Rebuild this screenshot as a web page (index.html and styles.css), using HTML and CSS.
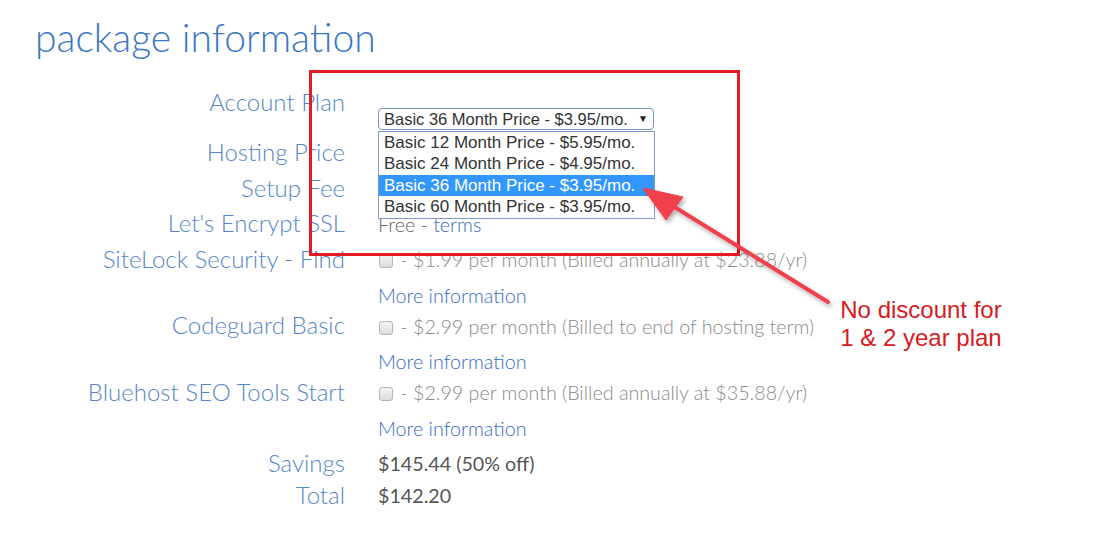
FILE: index.html
```html
<!DOCTYPE html>
<html lang="en">

<head>
    <meta charset="UTF-8">
    <meta name="viewport" content="width=device-width, initial-scale=1.0">
    <title>Package Information</title>
    <link rel="stylesheet" href="styles.css">
</head>

<body>

    <h1 class="title">package information</h1>

    <div class="form">
        <div class="row row-plan">
            <div class="label">Account Plan</div>
            <div class="value">
                <div class="select-wrap">
                    <div class="select">
                        <span>Basic 36 Month Price - $3.95/mo.</span>
                        <span class="caret">&#9660;</span>
                    </div>
                    <ul class="options">
                        <li>Basic 12 Month Price - $5.95/mo.</li>
                        <li>Basic 24 Month Price - $4.95/mo.</li>
                        <li class="selected">Basic 36 Month Price - $3.95/mo.</li>
                        <li>Basic 60 Month Price - $3.95/mo.</li>
                    </ul>
                </div>
            </div>
        </div>

        <!-- values of these two rows sit under the open list -->
        <div class="row">
            <div class="label">Hosting Price</div>
            <div class="value"></div>
        </div>
        <div class="row">
            <div class="label">Setup Fee</div>
            <div class="value"></div>
        </div>
        <div class="row">
            <div class="label">Let's Encrypt SSL</div>
            <div class="value dark">Free - <a href="#">terms</a></div>
        </div>

        <div class="row addon first-addon">
            <div class="label">SiteLock Security - Find</div>
            <div class="value">
                <div class="check-line"><span class="box"></span> - $1.99 per month (Billed annually at $23.88/yr)</div>
                <div class="more"><a href="#">More information</a></div>
            </div>
        </div>
        <div class="row addon">
            <div class="label">Codeguard Basic</div>
            <div class="value">
                <div class="check-line"><span class="box"></span> - $2.99 per month (Billed to end of hosting term)</div>
                <div class="more"><a href="#">More information</a></div>
            </div>
        </div>
        <div class="row addon">
            <div class="label">Bluehost SEO Tools Start</div>
            <div class="value">
                <div class="check-line"><span class="box"></span> - $2.99 per month (Billed annually at $35.88/yr)</div>
                <div class="more"><a href="#">More information</a></div>
            </div>
        </div>

        <div class="row total-row savings">
            <div class="label">Savings</div>
            <div class="value strong">$145.44 (50% off)</div>
        </div>
        <div class="row total-row">
            <div class="label">Total</div>
            <div class="value strong">$142.20</div>
        </div>
    </div>

    <!-- annotation drawn over the screenshot -->
    <div class="note-box"></div>
    <svg class="note-arrow" width="1103" height="534" viewBox="0 0 1103 534">
        <defs>
            <filter id="shadow" x="-20%" y="-20%" width="140%" height="140%">
                <feDropShadow dx="2" dy="3" stdDeviation="2" flood-color="#000" flood-opacity="0.3" />
            </filter>
        </defs>
        <g filter="url(#shadow)" fill="#f0404c" stroke="#f0404c">
            <line x1="828" y1="302" x2="668" y2="203" stroke-width="4" stroke-linecap="round" />
            <polygon points="643,188 683,197 666,220" stroke-width="1" stroke-linejoin="round" />
        </g>
    </svg>
    <div class="note-text">No discount for<br>1 &amp; 2 year plan</div>

</body>

</html>
```

FILE: styles.css
```css
body {
    font-family: Lato, "Open Sans", sans-serif;
    font-weight: 300;
    margin: 0;
    background-color: white;
    position: relative;
    height: 534px;
    overflow: hidden;
}

.title {
    font-size: 39px;
    font-weight: 300;
    line-height: 48px;
    color: #3b76c6;
    margin: 13px 0 0 35px;
}

.form {
    margin-top: 23px;
}

.row {
    display: grid;
    grid-template-columns: 345px 1fr;
    column-gap: 33px;
    align-items: start;
    line-height: 35.5px;
}

.label {
    text-align: right;
    font-size: 24px;
    color: #5686c6;
    white-space: nowrap;
}

.value {
    font-size: 19.7px;
    color: #8a8a8a;
    white-space: nowrap;
    /* line the smaller text up with the label baseline */
    margin-top: 1.6px;
    margin-bottom: -1.6px;
}

.value a {
    color: #3a6bbf;
    text-decoration: none;
}

.dark {
    color: #666;
}

.strong {
    color: #555;
    font-weight: 400;
}

/* account plan row with the open drop-down */
.row-plan {
    height: 50px;
}

.row-plan .value {
    margin: 0;
    padding-top: 24px;
}

.select-wrap {
    position: relative;
    width: 276px;
    font-family: "Liberation Sans", Arial, sans-serif;
    font-weight: 400;
    font-size: 16.5px;
    line-height: 20px;
    color: #333;
}

.select {
    display: flex;
    justify-content: space-between;
    align-items: center;
    height: 20px;
    padding: 0 5px 0 5px;
    border: 1px solid #7895bd;
    border-radius: 4px;
}

.caret {
    font-size: 10px;
    color: #222;
}

.options {
    position: absolute;
    top: 23px;
    left: 0;
    width: 275px;
    margin: 0;
    padding: 0 0 1px 0;
    list-style: none;
    background-color: white;
    border: 1px solid #7f9ccc;
    font-size: 17px;
    z-index: 2;
}

.options li {
    height: 21.3px;
    line-height: 21px;
    padding-left: 5px;
}

.options .selected {
    background-color: #3297fd;
    color: white;
}

/* add-on rows */
.addon {
    line-height: 32px;
}

.first-addon {
    margin-top: 2px;
}

.more {
    padding-top: 3.5px;
    line-height: 31px;
}

.box {
    display: inline-block;
    width: 12px;
    height: 12px;
    border: 1px solid #b5b5b5;
    border-radius: 3px;
    background: linear-gradient(#f4f4f4, #dcdcdc);
    vertical-align: -1px;
    margin-right: 2px;
    margin-left: 1px;
}

.total-row {
    line-height: 32px;
}

.savings {
    margin-top: 4.5px;
}

/* annotation */
.note-box {
    position: absolute;
    left: 309px;
    top: 70px;
    width: 425px;
    height: 180px;
    border: 3px solid #e31b25;
    z-index: 3;
}

.note-arrow {
    position: absolute;
    left: 0;
    top: 0;
    z-index: 4;
}

.note-text {
    position: absolute;
    left: 830px;
    top: 296px;
    width: 182px;
    text-align: center;
    font-family: "Liberation Sans", Arial, sans-serif;
    font-weight: 400;
    font-size: 24px;
    line-height: 28px;
    color: #d51a22;
}
```
